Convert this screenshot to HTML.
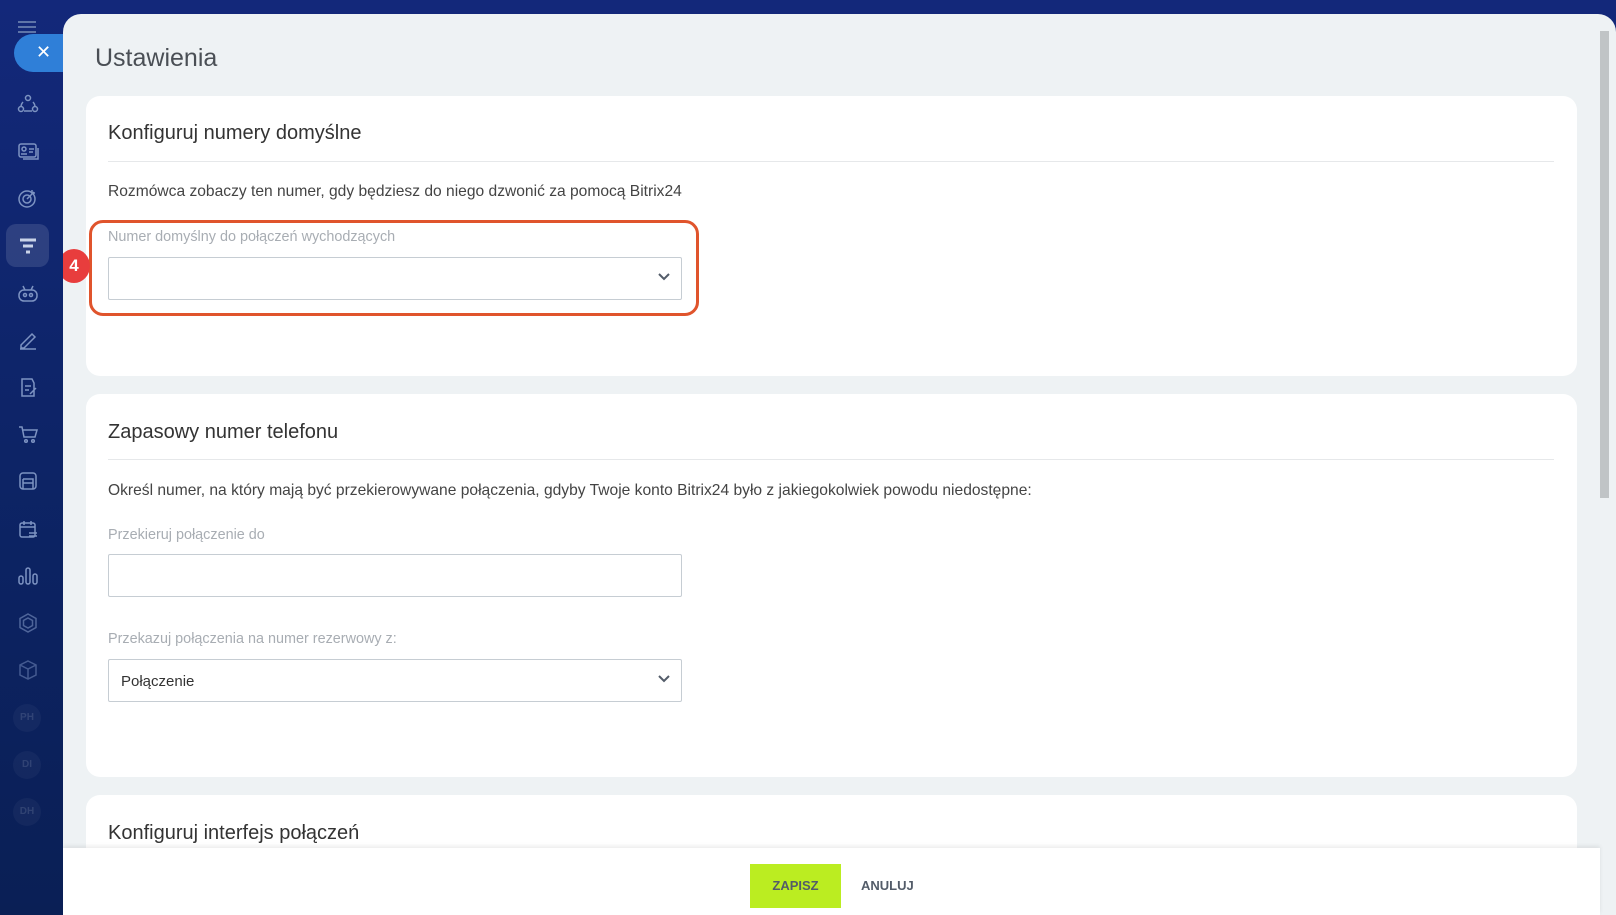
<!DOCTYPE html>
<html><head><meta charset="utf-8"><style>
*{box-sizing:border-box;margin:0;padding:0}
body{width:1616px;height:915px;overflow:hidden;font-family:"Liberation Sans",sans-serif;background:linear-gradient(180deg,#13287a 0%,#0d2466 50%,#0a1f55 100%);position:relative}
.sb{position:absolute;left:0;top:0;width:63px;height:915px}
.ic{position:absolute;left:17px;width:22px;height:22px}
.ic svg{width:22px;height:22px;stroke:#7d93c2;fill:none;stroke-width:1.5}
.close{position:absolute;left:14px;top:34px;width:60px;height:38px;border-radius:19px 0 0 19px;background:#2f7fd8;color:#fff;font-size:18px;line-height:36px;padding-left:22px}
.act{position:absolute;left:6px;top:224px;width:43px;height:43px;border-radius:10px;background:rgba(255,255,255,.12)}
.av{position:absolute;left:13px;width:28px;height:28px;border-radius:50%;background:rgba(255,255,255,.04);color:rgba(255,255,255,.12);font-size:10px;font-weight:bold;text-align:center;line-height:28px}
.panel{position:absolute;left:63px;top:14px;width:1553px;height:901px;background:#eef2f4;border-radius:18px 18px 0 0;overflow:hidden}
.title{position:absolute;left:32px;top:30px;font-size:25px;color:#4a4f55}
.card{position:absolute;left:23px;width:1491px;background:#fff;border-radius:14px}
.h{position:absolute;left:22px;font-size:20px;color:#333}
.div{position:absolute;left:22px;width:1446px;height:1px;background:#e6e8ea}
.t{position:absolute;left:22px;font-size:15.6px;color:#444}
.l{position:absolute;left:22px;font-size:14.4px;color:#a8adb3}
.in{position:absolute;left:22px;width:574px;height:43px;border:1px solid #c6cdd3;border-radius:2px;background:#fff;font-size:15px;color:#333;padding:13px 12px}
.chev{position:absolute;right:10px;top:14px;width:14px;height:10px}
.sc{position:absolute;left:1537px;top:17px;width:9px;height:467px;background:#c0c4c6}
.foot{position:absolute;left:0;top:834px;width:1537px;height:67px;background:#fff;box-shadow:0 -2px 4px rgba(0,0,0,.08)}
.btn{position:absolute;left:687px;top:16px;width:91px;height:44px;background:#bbed21;color:#535c69;font-size:13px;font-weight:bold;text-align:center;line-height:44px}
.can{position:absolute;left:798px;top:16px;line-height:44px;font-size:13px;font-weight:bold;color:#535c69}
</style></head><body>
<div class="sb">
<div style="position:absolute;left:18px;top:21px;width:18px;height:12px;border-top:2px solid #5e74a8;border-bottom:2px solid #5e74a8"></div>
<div style="position:absolute;left:18px;top:26px;width:18px;height:2px;background:#5e74a8"></div>
<div class="close">✕</div>
<div class="act"></div>
<div class="ic" style="top:93px"><svg viewBox="0 0 22 22"><circle cx="11" cy="5" r="2.5"/><circle cx="4" cy="16" r="2.5"/><circle cx="18" cy="16" r="2.5"/><path d="M6 9a7 7 0 0 0-2 4M16 9a7 7 0 0 1 2 4M7 18h8"/></svg></div>
<div class="ic" style="top:140px"><svg viewBox="0 0 22 22"><rect x="2" y="4" width="17" height="13" rx="2"/><circle cx="7" cy="9" r="2"/><path d="M4 14h6M12 9h5M12 12h4M21 8v11H6"/></svg></div>
<div class="ic" style="top:187px"><svg viewBox="0 0 22 22"><circle cx="10" cy="12" r="8"/><circle cx="10" cy="12" r="4"/><path d="M10 12l7-7M15 3v3h3"/></svg></div>
<div class="ic" style="top:235px"><svg viewBox="0 0 22 22" style="stroke-width:3;stroke:#c9d3e8"><path d="M3 5h16M6 11h10M9 17h4"/></svg></div>
<div class="ic" style="top:282px"><svg viewBox="0 0 22 22"><rect x="2" y="8" width="18" height="11" rx="5"/><path d="M6 4l2 4M16 4l-2 4"/><circle cx="8" cy="13" r="1.5"/><circle cx="14" cy="13" r="1.5"/></svg></div>
<div class="ic" style="top:329px"><svg viewBox="0 0 22 22"><path d="M4 16l11-11 3 3-11 11H4zM3 20h16"/></svg></div>
<div class="ic" style="top:376px"><svg viewBox="0 0 22 22"><path d="M15 3H5v17h12V7zM8 10h6M8 14h4M13 18l6-6"/></svg></div>
<div class="ic" style="top:423px"><svg viewBox="0 0 22 22"><path d="M2 4h3l2 10h11l2-7H6"/><circle cx="9" cy="18" r="1.3"/><circle cx="16" cy="18" r="1.3"/></svg></div>
<div class="ic" style="top:470px"><svg viewBox="0 0 22 22"><rect x="3" y="3" width="16" height="16" rx="3"/><path d="M6 9h10v10M6 9v10M6 13h10"/></svg></div>
<div class="ic" style="top:518px"><svg viewBox="0 0 22 22"><rect x="3" y="5" width="15" height="14" rx="2"/><path d="M7 3v4M14 3v4M3 9h15M12 15h8M12 18h8"/></svg></div>
<div class="ic" style="top:565px"><svg viewBox="0 0 22 22"><rect x="2" y="11" width="4" height="8" rx="2"/><rect x="9" y="3" width="4" height="16" rx="2"/><rect x="16" y="9" width="4" height="10" rx="2"/></svg></div>
<div class="ic" style="top:612px;opacity:.6"><svg viewBox="0 0 22 22"><path d="M11 2l8 4.5v9L11 20l-8-4.5v-9z"/><path d="M11 6l4.5 2.5v5L11 16l-4.5-2.5v-5z"/></svg></div>
<div class="ic" style="top:659px;opacity:.5"><svg viewBox="0 0 22 22"><path d="M11 2l8 4v10l-8 4-8-4V6zM3 6l8 4 8-4M11 10v10"/></svg></div>
<div class="av" style="top:704px">PH</div>
<div class="av" style="top:751px">DI</div>
<div class="av" style="top:798px">DH</div>
</div>
<div class="panel">
<div class="title">Ustawienia</div>
<div class="card" style="top:82px;height:280px">
<div class="h" style="top:26px">Konfiguruj numery domyślne</div>
<div class="div" style="top:65px"></div>
<div class="t" style="top:87px">Rozmówca zobaczy ten numer, gdy będziesz do niego dzwonić za pomocą Bitrix24</div>
<div class="l" style="top:133px">Numer domyślny do połączeń wychodzących</div>
<div class="in" style="top:161px"><svg class="chev" viewBox="0 0 14 10"><path d="M2 2l5 5 5-5" stroke="#535c69" stroke-width="2" fill="none"/></svg></div>
<div style="position:absolute;left:3px;top:124px;width:610px;height:96px;border:3px solid #e0542c;border-radius:14px"></div>
</div>
<div style="position:absolute;left:-5px;top:235px;width:32px;height:34px;border-radius:50%;background:#e83d3d;color:#fff;font-weight:bold;font-size:17px;text-align:center;line-height:34px">4</div>
<div class="card" style="top:380px;height:383px">
<div class="h" style="top:27px">Zapasowy numer telefonu</div>
<div class="div" style="top:65px"></div>
<div class="t" style="top:88px">Określ numer, na który mają być przekierowywane połączenia, gdyby Twoje konto Bitrix24 było z jakiegokolwiek powodu niedostępne:</div>
<div class="l" style="top:133px">Przekieruj połączenie do</div>
<div class="in" style="top:160px"></div>
<div class="l" style="top:237px">Przekazuj połączenia na numer rezerwowy z:</div>
<div class="in" style="top:265px">Połączenie<svg class="chev" viewBox="0 0 14 10"><path d="M2 2l5 5 5-5" stroke="#535c69" stroke-width="2" fill="none"/></svg></div>
</div>
<div class="card" style="top:781px;height:120px">
<div class="h" style="top:27px">Konfiguruj interfejs połączeń</div>
</div>
<div class="sc"></div>
<div class="foot"><div class="btn">ZAPISZ</div><div class="can">ANULUJ</div></div>
</div>
</body></html>
